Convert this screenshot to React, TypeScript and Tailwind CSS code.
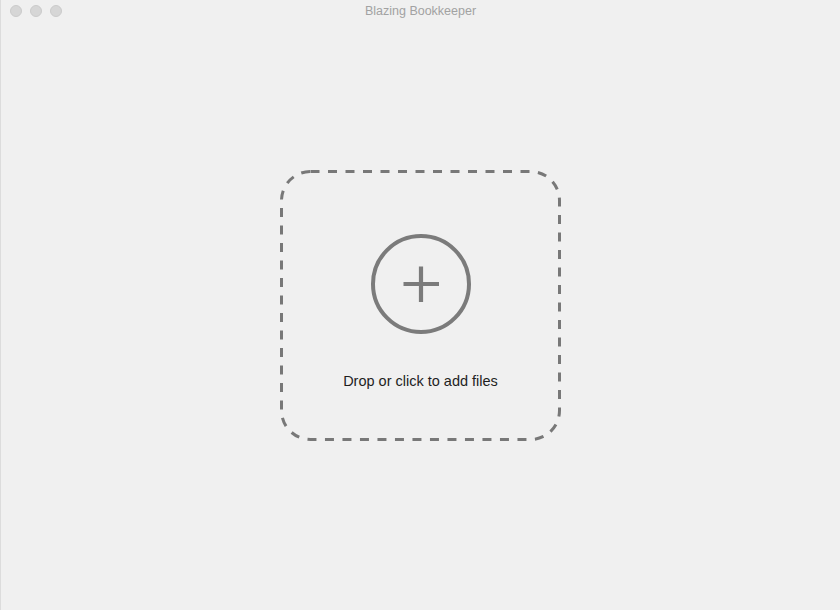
import React from 'react';

const TrafficLights = () => (
  <div className="flex items-center gap-[8px] pl-[9px]">
    {[0, 1, 2].map((i) => (
      <span key={i} className="block h-[12px] w-[12px] rounded-full bg-[#d6d6d6] border border-[#cbcbcb]" />
    ))}
  </div>
);

const PlusCircle = () => (
  <svg width="104" height="104" viewBox="0 0 104 104" fill="none">
    <circle cx="52" cy="52" r="48" stroke="#7b7b7b" strokeWidth="4" />
    <path d="M52 34.5v35.5M34.5 52h35.5" stroke="#7b7b7b" strokeWidth="4.2" />
  </svg>
);

// dashed outline drawn as svg so dash length matches
const DashedOutline = () => (
  <svg className="pointer-events-none absolute inset-0" width="281" height="271" fill="none">
    <rect x="1.5" y="1.5" width="278" height="268" rx="29" stroke="#787878" strokeWidth="3" strokeDasharray="9 8.5" />
  </svg>
);

export default function App() {
  return (
    <div
      className="flex h-[610px] w-[840px] flex-col bg-[#f0f0f0] border-l border-[#dcdcdc]"
      style={{ fontFamily: '"Liberation Sans", Arial, sans-serif' }}
    >
      {/* Title bar */}
      <div className="relative flex h-[22px] shrink-0 items-center">
        <TrafficLights />
        <div className="absolute inset-0 flex items-center justify-center text-[12.5px] text-[#a2a2a2]">
          Blazing Bookkeeper
        </div>
      </div>

      {/* Drop zone */}
      <div className="flex flex-1 items-start justify-center pt-[148px]">
        <button className="relative flex h-[271px] w-[281px] flex-col items-center pt-[62px]">
          <DashedOutline />
          <PlusCircle />
          <span className="mt-[35px] text-[14.5px] text-[#1e1e1e]">Drop or click to add files</span>
        </button>
      </div>
    </div>
  );
}
